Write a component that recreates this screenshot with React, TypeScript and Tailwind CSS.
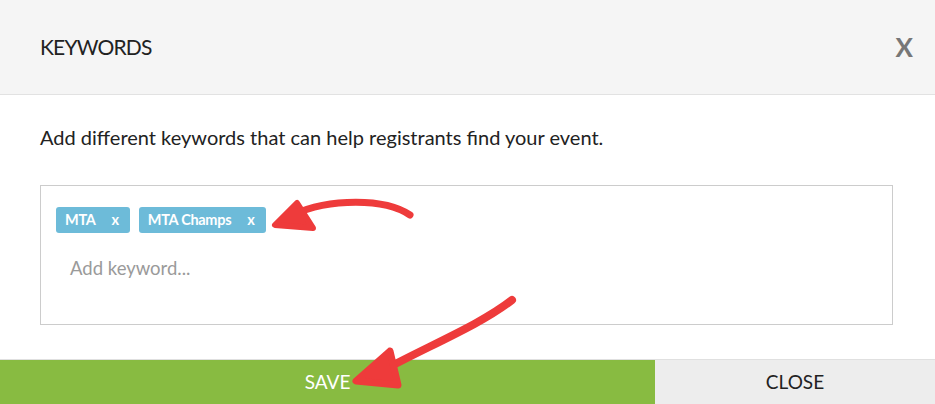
export default function App() {
  return (
    <div
      className="relative w-[935px] h-[404px] overflow-hidden bg-white flex flex-col"
      style={{ fontFamily: "Lato, 'Open Sans', sans-serif" }}
    >
      <div className="h-[95px] shrink-0 bg-[#f5f5f5] border-b border-[#e2e2e2] flex items-center justify-between pl-[40px] pr-[22px]">
        <h2 className="text-[21px] text-[#222] tracking-[-0.8px]">KEYWORDS</h2>
        <button className="text-[26px] font-bold text-[#777] leading-none">X</button>
      </div>

      <div className="flex-1 px-[40px] pt-[28px]">
        <p className="text-[20px] text-[#222] leading-[28px]">
          Add different keywords that can help registrants find your event.
        </p>
        <div className="mt-[34px] h-[140px] w-[853px] border border-[#cccccc] px-[15px] pt-[21px]">
          <div className="flex gap-[9px]">
            {["MTA", "MTA Champs"].map((tag) => (
              <span
                key={tag}
                className="h-[26px] rounded-[3px] bg-[#6dbbd9] text-white text-[14.5px] font-bold tracking-[-0.3px] flex items-center pl-[9px] pr-[11px] gap-[16px]"
              >
                <span>{tag}</span>
                <span>x</span>
              </span>
            ))}
          </div>
          <div className="mt-[22px] pl-[14px] text-[18.5px] text-[#9a9a9a]">Add keyword...</div>
        </div>
      </div>

      <div className="h-[45px] shrink-0 flex border-t border-[#e0e0e0]">
        <button className="w-[655px] bg-[#88bb41] text-white text-[19px] flex items-center justify-center">
          SAVE
        </button>
        <button className="flex-1 bg-[#ededed] text-[#222] text-[19px] flex items-center justify-center">
          CLOSE
        </button>
      </div>

      <svg className="absolute inset-0 pointer-events-none" width="935" height="404" viewBox="0 0 935 404">
        <g fill="#ee3b3b" stroke="#ee3b3b" strokeLinecap="round" strokeLinejoin="round">
          <path d="M410 215 C 385 198, 330 198, 292 215" fill="none" strokeWidth="7" />
          <path d="M297 203 L275 225 L313 228 Z" strokeWidth="6" />
          <path d="M512 300 C 480 325, 430 345, 380 372" fill="none" strokeWidth="8" />
          <path d="M390 351 L356 381 L398 385 Z" strokeWidth="7" />
        </g>
      </svg>
    </div>
  );
}
